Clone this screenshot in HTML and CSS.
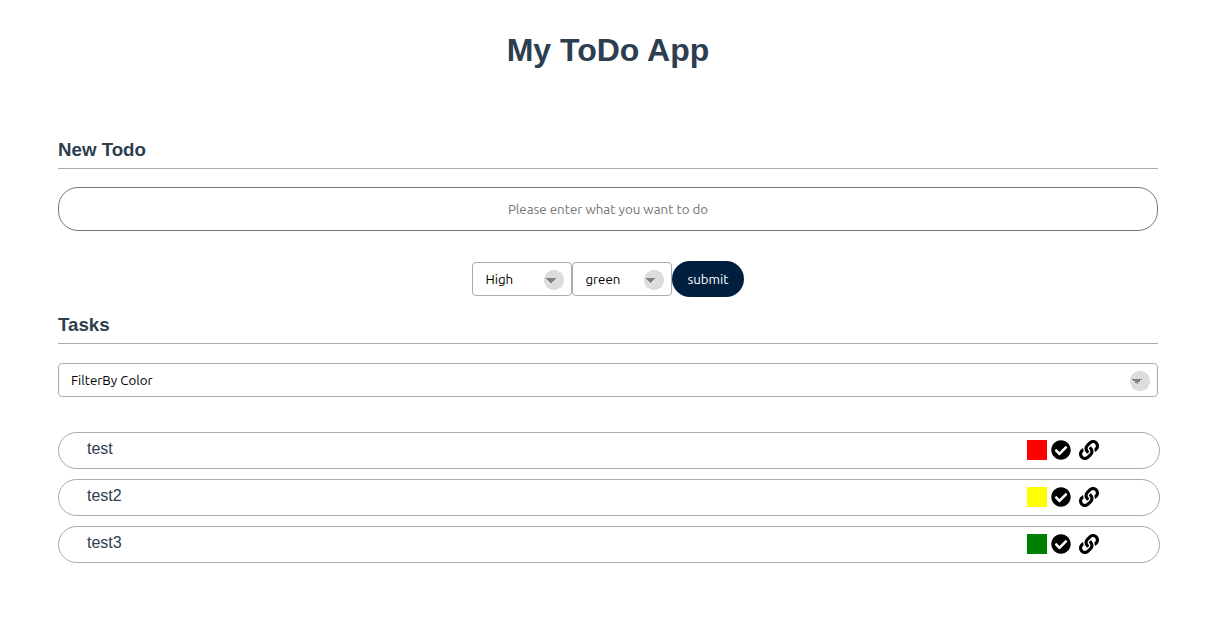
FILE: index.html
```html
<!DOCTYPE html>
<html lang="en">
<head>
<meta charset="utf-8">
<title>My ToDo App</title>
<link rel="stylesheet" href="styles.css">
</head>
<body>
<svg class="sprite" aria-hidden="true">
  <symbol id="check" viewBox="0 0 512 512"><path d="M504 256c0 136.967-111.033 248-248 248S8 392.967 8 256 119.033 8 256 8s248 111.033 248 248zM227.314 387.314l184-184c6.248-6.248 6.248-16.379 0-22.627l-22.627-22.627c-6.248-6.249-16.379-6.249-22.628 0L216 308.118l-70.059-70.059c-6.248-6.248-16.379-6.248-22.628 0l-22.627 22.627c-6.248 6.248-6.248 16.379 0 22.627l104 104c6.249 6.249 16.379 6.249 22.628.001z"/></symbol>
  <symbol id="link" viewBox="0 0 512 512"><path d="M326.612 185.391c59.747 59.809 58.927 155.698.36 214.59-.11.12-.24.25-.36.37l-67.2 67.2c-59.27 59.27-155.699 59.262-214.96 0-59.27-59.26-59.27-155.7 0-214.96l37.106-37.106c9.84-9.84 26.786-3.3 27.294 10.606.648 17.722 3.826 35.527 9.69 52.721 1.986 5.822.567 12.262-3.783 16.612l-13.087 13.087c-28.026 28.026-28.905 73.66-1.155 101.96 28.024 28.579 74.086 28.749 102.325.51l67.2-67.19c28.191-28.191 28.073-73.757 0-101.83-3.701-3.694-7.429-6.564-10.341-8.569a16.037 16.037 0 0 1-6.947-12.606c-.396-10.567 3.348-21.456 11.698-29.806l21.054-21.055c5.521-5.521 14.182-6.199 20.584-1.731a152.482 152.482 0 0 1 20.522 17.197zM467.547 44.449c-59.261-59.262-155.69-59.27-214.96 0l-67.2 67.2c-.12.12-.25.25-.36.37-58.566 58.892-59.387 154.781.36 214.59a152.454 152.454 0 0 0 20.521 17.196c6.402 4.468 15.064 3.789 20.584-1.731l21.054-21.055c8.35-8.35 12.094-19.239 11.698-29.806a16.037 16.037 0 0 0-6.947-12.606c-2.912-2.005-6.64-4.875-10.341-8.569-28.073-28.073-28.191-73.639 0-101.83l67.2-67.19c28.239-28.239 74.3-28.069 102.325.51 27.75 28.3 26.872 73.934-1.155 101.96l-13.087 13.087c-4.35 4.35-5.769 10.79-3.783 16.612 5.864 17.194 9.042 34.999 9.69 52.721.509 13.906 17.454 20.446 27.294 10.606l37.106-37.106c59.271-59.259 59.271-155.699.001-214.959z"/></symbol>
</svg>
<main class="app">
  <h1 class="title">My ToDo App</h1>
  <section class="new-todo">
    <h3 class="heading">New Todo</h3>
    <form>
      <input class="todo-input" type="text" aria-label="New todo" placeholder="Please enter what you want to do">
      <div class="controls">
        <select class="select" aria-label="Priority"><option>High</option><option>Medium</option><option>Low</option></select>
        <select class="select" aria-label="Color"><option>green</option><option>yellow</option><option>red</option></select>
        <button class="submit" type="submit">submit</button>
      </div>
    </form>
  </section>
  <section class="tasks">
    <h3 class="heading">Tasks</h3>
    <select class="select filter" aria-label="Filter by color"><option>FilterBy Color</option><option>red</option><option>yellow</option><option>green</option></select>
    <ul class="list">
      <li class="task"><span class="name">test</span><span class="swatch red"></span><button class="icon" aria-label="Complete test"><svg><use href="#check"/></svg></button><button class="icon" aria-label="Link test"><svg><use href="#link"/></svg></button></li>
      <li class="task"><span class="name">test2</span><span class="swatch yellow"></span><button class="icon" aria-label="Complete test2"><svg><use href="#check"/></svg></button><button class="icon" aria-label="Link test2"><svg><use href="#link"/></svg></button></li>
      <li class="task"><span class="name">test3</span><span class="swatch green"></span><button class="icon" aria-label="Complete test3"><svg><use href="#check"/></svg></button><button class="icon" aria-label="Link test3"><svg><use href="#link"/></svg></button></li>
    </ul>
  </section>
</main>
</body>
</html>
```
FILE: styles.css
```css
* { box-sizing: border-box; }
body { margin: 0; background: #fff; color: #2c3e50; font: 16px/18px "Nimbus Sans", "Liberation Sans", Arial, sans-serif; }
.sprite { display: none; }
.app { padding: 30px 52px 0 58px; }
.title { margin: 0; font-size: 32px; line-height: 40px; text-align: center; }
.new-todo { margin-top: 68px; }
.heading { margin: 0; padding-bottom: 6px; border-bottom: 1px solid #aaa; line-height: 24px; }
.todo-input, .select, .submit { font-family: Ubuntu, "Noto Sans", sans-serif; }
.todo-input { display: block; width: 100%; height: 44px; margin-top: 18px; padding: 0 16px; border: 1px solid #767676; border-radius: 20px; background: #fff; color: #000; text-align: center; }
.todo-input::placeholder { color: #757575; }
.controls { display: flex; justify-content: center; align-items: center; margin-top: 30px; }
.select {
  appearance: none; width: 100px; height: 34px; padding: 0 28px 0 12px;
  border: 1px solid #aaa; border-radius: 4px; color: #000;
  background:
    linear-gradient(45deg, transparent 50%, gray 50%) right 20px top 15px / 5px 5px no-repeat,
    linear-gradient(135deg, gray 50%, transparent 50%) right 15px top 15px / 5px 5px no-repeat,
    radial-gradient(#ddd 70%, transparent 72%) right 7px top 7px / 20px 20px no-repeat, #fff;
}
.submit { height: 36px; padding: 0 15px; border: 0; border-radius: 18px; background: #001f3f; color: #fff; }
.tasks { margin-top: 16px; }
.filter { display: block; width: 100%; margin-top: 19px; }
.list { display: grid; gap: 10px; margin: 35px -2px 0 0; padding: 0; list-style: none; }
.task { display: flex; align-items: center; height: 37px; padding: 0 56px 1px 28px; border: 1px solid #aaa; border-radius: 20px; }
.name { flex: 1; padding-bottom: 2px; }
.swatch { width: 20px; height: 20px; }
.red { background: red; }
.yellow { background: yellow; }
.green { background: green; }
.icon { display: flex; width: 28px; padding: 0 4px; border: 0; background: none; }
.icon svg { width: 20px; height: 20px; fill: #000; }
```
